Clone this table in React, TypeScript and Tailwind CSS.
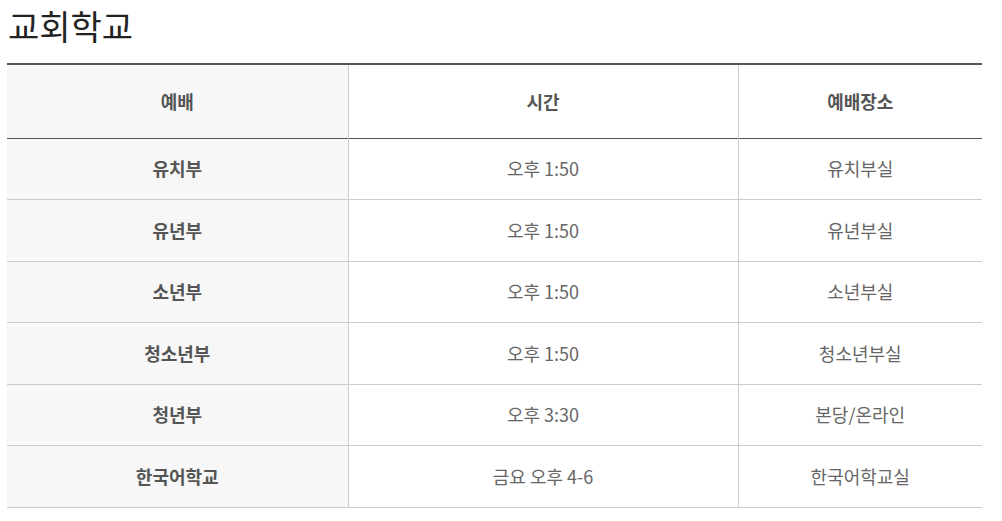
import React from "react";

type Row = { name: string; time: string; place: string };

const rows: Row[] = [
  { name: "유치부", time: "오후 1:50", place: "유치부실" },
  { name: "유년부", time: "오후 1:50", place: "유년부실" },
  { name: "소년부", time: "오후 1:50", place: "소년부실" },
  { name: "청소년부", time: "오후 1:50", place: "청소년부실" },
  { name: "청년부", time: "오후 3:30", place: "본당/온라인" },
  { name: "한국어학교", time: "금요 오후 4-6", place: "한국어학교실" },
];

export default function App() {
  return (
    <div className="bg-white px-[7px] pt-[4px] pb-4 w-[1002px] font-['Noto_Sans_CJK_KR','Noto_Sans',sans-serif]">
      <h2 className="text-[34px] leading-[44px] text-[#222] pl-[1px] mb-[15px]">교회학교</h2>
      <table className="w-[975px] border-collapse table-fixed border-t-2 border-[#555]">
        <colgroup>
          <col className="w-[341px]" />
          <col className="w-[390px]" />
          <col className="w-[244px]" />
        </colgroup>
        <thead>
          <tr className="border-b border-[#555]">
            <th className="h-[74px] bg-[#f7f7f7] text-[18px] font-bold text-[#555] border-r border-[#ccc]">예배</th>
            <th className="h-[74px] text-[18px] font-bold text-[#555] border-r border-[#ccc]">시간</th>
            <th className="h-[74px] text-[18px] font-bold text-[#555]">예배장소</th>
          </tr>
        </thead>
        <tbody>
          {rows.map((r) => (
            <tr key={r.name} className="border-b border-[#ccc]">
              <td className="h-[61.5px] bg-[#f7f7f7] text-center text-[18px] font-bold text-[#555] border-r border-[#ccc]">
                {r.name}
              </td>
              <td className="h-[61.5px] text-center text-[18px] text-[#666] border-r border-[#ccc]">{r.time}</td>
              <td className="h-[61.5px] text-center text-[18px] text-[#666]">{r.place}</td>
            </tr>
          ))}
        </tbody>
      </table>
    </div>
  );
}
